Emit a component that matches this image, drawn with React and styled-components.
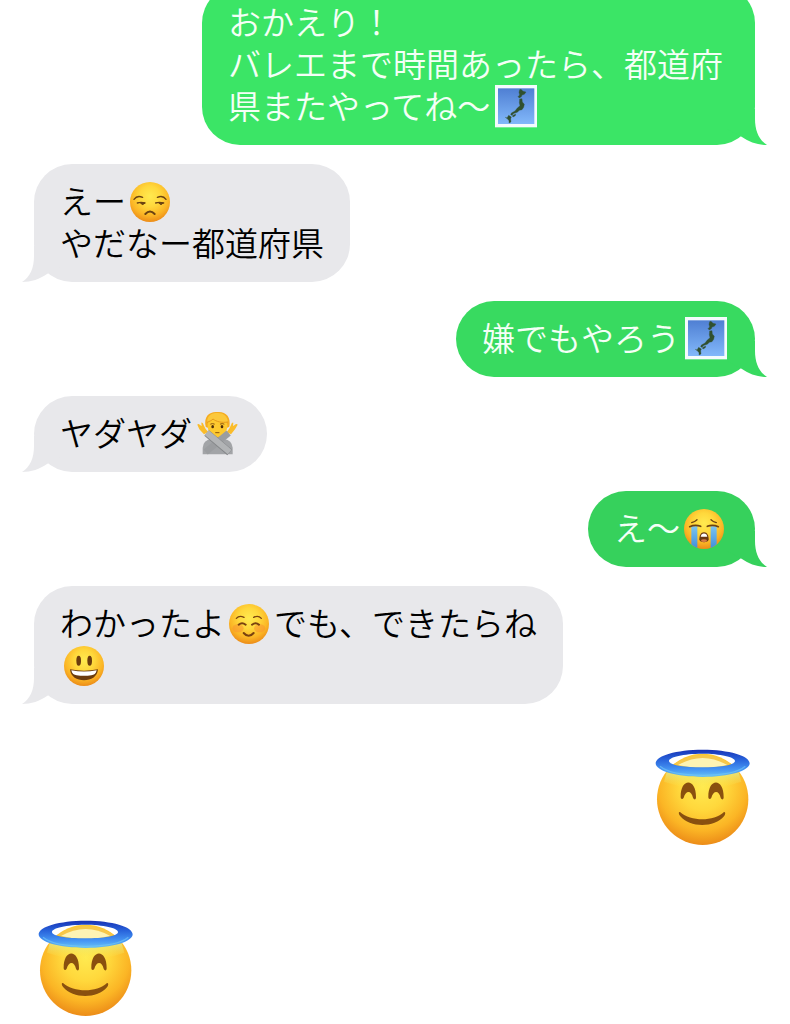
import React, { useId } from "react";
import styled, { createGlobalStyle } from "styled-components";

const GlobalStyle = createGlobalStyle`
  *, *::before, *::after { box-sizing: border-box; }
  body {
    margin: 0;
    background: #ffffff;
    color: #000000;
    font-family: "Noto Sans CJK JP", sans-serif;
  }
`;

const Conversation = styled.main`
  min-height: 100vh;
  overflow: hidden;
`;

const Thread = styled.ol`
  list-style: none;
  display: flex;
  flex-direction: column;
  gap: 19px;
  margin: -15px 0 0;
  padding: 0 35px 0 34px;
`;

const Message = styled.li`
  display: flex;
  justify-content: ${({ $sent }) => ($sent ? "flex-end" : "flex-start")};
`;

const StickerMessage = styled(Message)`
  padding: 26px 5px 0 3px;

  & + & {
    padding-top: 55px;
  }
`;

const Bubble = styled.div`
  position: relative;
  max-width: 553px;
  padding: 15px 26px 19px;
  border-radius: 38px;
  background: ${({ $fill }) => $fill};
  color: ${({ $sent }) => ($sent ? "#f4fff6" : "#000000")};
`;

const Text = styled.p`
  margin: 0;
  font-size: 33px;
  font-weight: 350;
  line-height: 42px;
  word-break: break-all;
`;

const TailShape = styled.svg`
  position: absolute;
  bottom: 0;
  ${({ $sent }) => ($sent ? "right: -12px; transform: scaleX(-1);" : "left: -12px;")}
  width: 40px;
  height: 36px;
`;

const InlineEmoji = styled.svg`
  display: inline-block;
  vertical-align: top;
  width: 49px;
  height: 42px;
  margin: 2px 0 -2px;
  overflow: visible;
`;

const Sticker = styled.svg`
  display: block;
  width: 96px;
  height: 97px;
`;

function ChatBubble({ sent, fill, children }) {
  return (
    <Message $sent={sent}>
      <Bubble $sent={sent} $fill={fill}>
        <TailShape $sent={sent} viewBox="0 0 40 36" aria-hidden="true">
          <path
            d="M12 0V10C12 22 8 31 0 36C9 36 18 33 25 28L40 20V0Z"
            fill={fill}
          />
        </TailShape>
        <Text>{children}</Text>
      </Bubble>
    </Message>
  );
}

function FaceGradient({ id }) {
  return (
    <radialGradient id={id} cx="50%" cy="36%" r="64%">
      <stop offset="0" stopColor="#ffea50" />
      <stop offset="0.4" stopColor="#ffd83c" />
      <stop offset="0.75" stopColor="#fbb525" />
      <stop offset="1" stopColor="#ec8c18" />
    </radialGradient>
  );
}

function FaceEmoji({ label, children }) {
  const id = useId();
  return (
    <InlineEmoji viewBox="0 0 147 126" role="img" aria-label={label}>
      <defs>
        <FaceGradient id={id} />
      </defs>
      <circle cx="72" cy="63" r="60" fill={`url(#${id})`} />
      {children}
    </InlineEmoji>
  );
}

function Unamused() {
  return (
    <FaceEmoji label="不満な顔">
      <g transform="translate(-18 -32)" fill="none" stroke="#6b4212" strokeLinecap="round">
        <path d="M42 87Q51 74 68 81M112 81Q129 74 138 87" strokeWidth="4" />
        <path d="M52 98Q63 94 75 98M107 98Q118 94 131 98" strokeWidth="4" />
        <path d="M62 99Q68 107 74 99ZM117 99Q123 107 129 99Z" fill="#4a2c0c" strokeWidth="3" />
        <path d="M76 131Q90 116 104 131" strokeWidth="6" />
      </g>
    </FaceEmoji>
  );
}

function Crying() {
  const id = useId();
  return (
    <FaceEmoji label="大泣きの顔">
      <defs>
        <linearGradient id={id} x1="0" y1="0" x2="0" y2="1">
          <stop offset="0" stopColor="#7cc4ee" />
          <stop offset="1" stopColor="#3f8fdc" />
        </linearGradient>
      </defs>
      <g transform="translate(-22 -49)">
        <path d="M56 104H74V169Q63 166 56 158ZM114 104H132V158Q125 166 114 169Z" fill={`url(#${id})`} />
        <g fill="none" stroke="#6b4212" strokeLinecap="round">
          <path d="M57 93Q67 90 73 84M115 84Q121 90 131 93" strokeWidth="4" />
          <path d="M51 105Q68 98 84 104M104 104Q120 98 137 105" strokeWidth="5" />
        </g>
        <path d="M94 122C84 122 80 133 80 143C80 155 108 155 108 143C108 133 104 122 94 122Z" fill="#673811" />
        <path d="M86 129Q94 122 102 129L104 135H84Z" fill="#ffffff" />
        <ellipse cx="94" cy="147" rx="9" ry="4" fill="#d77a45" />
      </g>
    </FaceEmoji>
  );
}

function Relaxed() {
  return (
    <FaceEmoji label="ほほえみ">
      <g transform="translate(-19 -18)">
        <ellipse cx="58" cy="94" rx="17" ry="12" fill="#f98f30" opacity="0.5" />
        <ellipse cx="123" cy="94" rx="17" ry="12" fill="#f98f30" opacity="0.5" />
        <g fill="none" stroke="#7a4210" strokeLinecap="round">
          <path d="M53 64Q62 54 76 61M105 61Q119 54 128 64" strokeWidth="4" />
          <path d="M60 83Q70 74 81 83M100 83Q111 74 121 83" strokeWidth="6" />
          <path d="M75 108Q90 125 105 108" strokeWidth="6" />
        </g>
      </g>
    </FaceEmoji>
  );
}

function Grinning() {
  return (
    <FaceEmoji label="笑顔">
      <g transform="translate(-146 -40)">
        <ellipse cx="202" cy="87" rx="7" ry="15" fill="#6b3b0d" />
        <ellipse cx="235" cy="87" rx="7" ry="15" fill="#6b3b0d" />
        <path d="M176 113Q218 121 260 113C258 136 239 146 218 146C197 146 178 136 176 113Z" fill="#6b3b0d" />
        <path d="M180 116Q218 123 256 116C254 126 248 130 240 131Q218 134 196 131C188 130 182 126 180 116Z" fill="#ffffff" />
      </g>
    </FaceEmoji>
  );
}

function NoGesture() {
  return (
    <InlineEmoji viewBox="0 0 147 126" role="img" aria-label="腕でバツを作る人">
      <g transform="translate(-21 -39)">
        <path d="M53 163V143Q55 120 78 117H117Q141 121 143 143V163Z" fill="#a2a4a7" />
        <path d="M86 98H109V116Q98 128 86 116Z" fill="#e8a11d" />
        <path d="M62 80C55 48 75 34 96 36C121 33 139 49 133 80C129 86 65 86 62 80Z" fill="#f5ac20" />
        <path d="M68 76C68 60 80 54 97 58C114 56 127 60 127 76C127 96 116 111 97 111S68 96 68 76Z" fill="#fdc92f" />
        <path d="M66 66C67 44 83 38 99 39C115 39 127 48 129 65C110 68 94 64 84 56C80 62 73 63 66 66Z" fill="#fbc83b" />
        <path d="M66 67C73 64 80 62 84 57C94 65 110 69 129 66" fill="none" stroke="#e59a1c" strokeWidth="3" />
        <g fill="none" stroke="#8c5510" strokeWidth="3" strokeLinecap="round">
          <path d="M77 72Q82 69 88 72M106 72Q112 69 117 72M92 98H102" />
        </g>
        <ellipse cx="83" cy="80" rx="4" ry="5" fill="#4e2d0a" />
        <ellipse cx="111" cy="80" rx="4" ry="5" fill="#4e2d0a" />
        <path d="M57 103L43 88L37 74Q39 69 46 76L50 78L49 68Q53 65 57 77L62 87L70 96Z" fill="#fabc2a" />
        <path d="M138 103L150 88L158 74Q155 69 148 76L144 78L145 68Q141 65 137 77L132 87L125 96Z" fill="#fabc2a" />
        <path d="M131 99L62 156" stroke="#9b9da0" strokeWidth="20" />
        <path d="M65 99L134 157" stroke="#85878a" strokeWidth="22" />
        <path d="M65 98L134 156" stroke="#b2b4b6" strokeWidth="18" />
      </g>
    </InlineEmoji>
  );
}

function JapanMap() {
  const id = useId();
  return (
    <InlineEmoji viewBox="0 0 147 126" role="img" aria-label="日本地図">
      <defs>
        <linearGradient id={id} x1="0" y1="0" x2="0" y2="1">
          <stop offset="0" stopColor="#4f7fd3" />
          <stop offset="1" stopColor="#82b8fa" />
        </linearGradient>
      </defs>
      <g transform="translate(-9 -33)">
        <rect x="24" y="30" width="126" height="127" fill="#f4fbfd" />
        <rect x="33" y="40" width="109" height="107" fill={`url(#${id})`} />
        <g fill="#30502f" stroke="#30502f" strokeWidth="1" strokeLinejoin="round">
          <path d="M98 44L102 43L108 49L117 51L112 58L105 60L103 65L97 69L93 65L98 60L96 52Z" />
          <path d="M98 72L105 71L106 81L112 88L110 97L105 104L97 106L91 112L81 115L75 121L71 119L73 114L84 108L91 99L99 92L97 83Z" />
          <path d="M55 127L60 129L65 121L73 126L71 131L72 141L66 144L66 137L62 132Z" />
          <path d="M76 122L86 117L85 122L78 126Z" />
        </g>
      </g>
    </InlineEmoji>
  );
}

function HaloSticker() {
  const id = useId();
  const face = `${id}face`;
  const ring = `${id}ring`;
  const glow = `${id}glow`;
  return (
    <Sticker viewBox="42 42 288 291" role="img" aria-label="天使の笑顔">
      <defs>
        <FaceGradient id={face} />
        <linearGradient id={ring} x1="0" y1="0" x2="0" y2="1">
          <stop offset="0" stopColor="#1832b4" />
          <stop offset="0.35" stopColor="#2761da" />
          <stop offset="0.75" stopColor="#4798f5" />
          <stop offset="1" stopColor="#69c3f2" />
        </linearGradient>
        <linearGradient id={glow} x1="0" y1="0" x2="0" y2="1">
          <stop offset="0" stopColor="#d9f6a8" stopOpacity="0.9" />
          <stop offset="1" stopColor="#ffe64a" stopOpacity="0" />
        </linearGradient>
      </defs>
      <circle cx="188" cy="193" r="137" fill={`url(#${face})`} />
      <path d="M80 112Q188 142 296 112L304 140Q188 180 72 140Z" fill={`url(#${glow})`} opacity="0.7" />
      <path d="M104 86Q188 36 272 86Q188 112 104 86Z" fill="#f6c74a" />
      <path d="M114 90Q188 48 262 90Q188 108 114 90Z" fill="#fdf3b4" />
      <path
        fillRule="evenodd"
        d="M47 85C47 62 109 44 188 44S329 62 329 85S267 126 188 126S47 108 47 85ZM87 78C87 90 131 97 186 97S285 90 285 78S241 56 186 56S87 66 87 78Z"
        fill={`url(#${ring})`}
      />
      <path d="M60 94C86 116 139 121 188 121S290 116 316 94" fill="none" stroke="#75caf7" strokeWidth="4" opacity="0.6" />
      <g fill="#89500f">
        <path d="M122 186C121 128 169 128 168 187C168 195 162 195 159 188C154 165 137 165 131 188C128 194 122 193 122 186Z" />
        <path d="M205 186C204 128 252 128 251 187C251 195 245 195 242 188C237 165 220 165 214 188C211 194 205 193 205 186Z" />
        <path d="M120 231C153 260 221 260 252 231C257 231 257 238 252 244C224 279 149 279 121 244C115 236 115 230 120 231Z" />
      </g>
    </Sticker>
  );
}

export default function App() {
  return (
    <>
      <GlobalStyle />
      <Conversation>
        <Thread>
          <ChatBubble sent fill="#3be566">
            おかえり！
            <br />
            バレエまで時間あったら、都道府県またやってね〜
            <JapanMap />
          </ChatBubble>
          <ChatBubble fill="#e8e8eb">
            えー
            <Unamused />
            <br />
            やだなー都道府県
          </ChatBubble>
          <ChatBubble sent fill="#38da60">
            嫌でもやろう
            <JapanMap />
          </ChatBubble>
          <ChatBubble fill="#e8e8eb">
            ヤダヤダ
            <NoGesture />
          </ChatBubble>
          <ChatBubble sent fill="#36d15c">
            え〜
            <Crying />
          </ChatBubble>
          <ChatBubble fill="#e8e8eb">
            わかったよ
            <Relaxed />
            でも、できたらね
            <br />
            <Grinning />
          </ChatBubble>
          <StickerMessage $sent>
            <HaloSticker />
          </StickerMessage>
          <StickerMessage>
            <HaloSticker />
          </StickerMessage>
        </Thread>
      </Conversation>
    </>
  );
}
